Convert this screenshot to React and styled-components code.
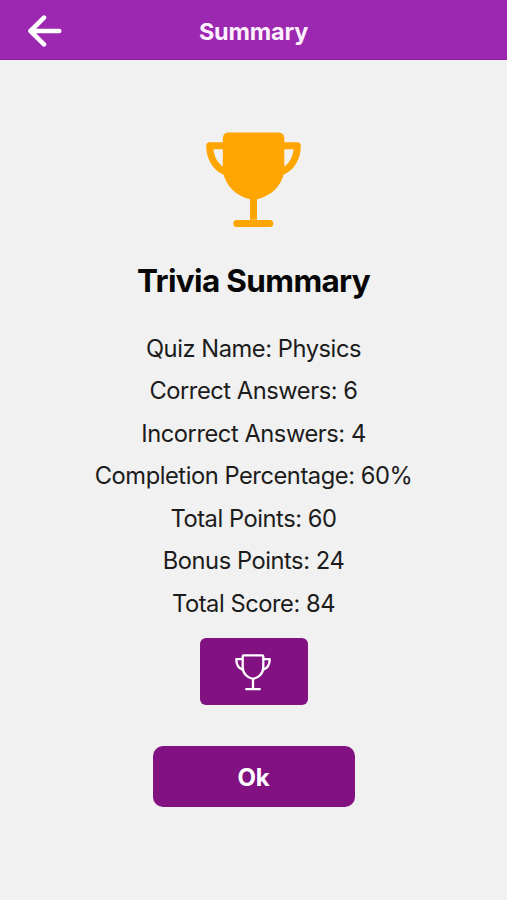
import React from 'react';
import styled, { createGlobalStyle } from 'styled-components';

const results = [
	{ label: 'Quiz Name', value: 'Physics' },
	{ label: 'Correct Answers', value: '6' },
	{ label: 'Incorrect Answers', value: '4' },
	{ label: 'Completion Percentage', value: '60%' },
	{ label: 'Total Points', value: '60' },
	{ label: 'Bonus Points', value: '24' },
	{ label: 'Total Score', value: '84' },
];

function BackArrow() {
	return (
		<svg
			width='34'
			height='32'
			viewBox='0 0 34 32'
			fill='none'
			stroke='#fff'
			strokeWidth='4.6'
			strokeLinecap='round'
			strokeLinejoin='round'
		>
			<path d='M16 2.6L2.5 16L16 29.4M3 16H31.2' />
		</svg>
	);
}

function TrophyFilled() {
	return (
		<svg width='95' height='95' viewBox='0 0 95 95'>
			<path
				fill='#ffa500'
				d='M22 0.5H73Q78.3 1 78.3 6.5V40C75.5 54 65 64 51 67.3V87.8H44V67.3C30 64 20 54 16.8 40V6.5Q17 1 22 0.5Z'
			/>
			<path
				fill='none'
				stroke='#ffa500'
				strokeWidth='7'
				strokeLinecap='round'
				strokeLinejoin='round'
				d='M19 13.7H3.7C3.7 25 9 35.5 19 39.6M76 13.7H91.3C91.3 25 86 35.5 76 39.6M30.8 91.4H63.8'
			/>
		</svg>
	);
}

function TrophyOutline() {
	return (
		<svg
			width='36'
			height='37'
			viewBox='0 0 36 37'
			fill='none'
			stroke='#fff'
			strokeWidth='2.3'
			strokeLinecap='round'
			strokeLinejoin='round'
		>
			<path d='M8.8 1.4H27.2Q28.3 1.4 28.3 2.5V13C28.3 19.5 23.7 23.9 18 24.8C12.3 23.9 7.7 19.5 7.7 13V2.5Q7.7 1.4 8.8 1.4Z' />
			<path d='M7.7 5.2H1.3C1.3 10 3.5 14.3 7.9 15.8M28.3 5.2H34.7C34.7 10 32.5 14.3 28.1 15.8' />
			<path d='M18 24.8V35.2M11.2 35.2H24.8' />
		</svg>
	);
}

function App() {
	return (
		<Screen>
			<GlobalStyles />
			<Header>
				<BackButton aria-label='Back'>
					<BackArrow />
				</BackButton>
				<HeaderTitle>Summary</HeaderTitle>
			</Header>
			<Content>
				<TrophyFilled />
				<Title>Trivia Summary</Title>
				<ResultList>
					{results.map(({ label, value }) => (
						<ResultRow key={label}>
							{label}: {value}
						</ResultRow>
					))}
				</ResultList>
				<TrophyButton aria-label='Leaderboard'>
					<TrophyOutline />
				</TrophyButton>
				<OkButton>Ok</OkButton>
			</Content>
		</Screen>
	);
}

const GlobalStyles = createGlobalStyle`
	* {
		box-sizing: border-box;
	}
	body {
		margin: 0;
		background: #f1f1f1;
		font-family: Inter, 'Liberation Sans', sans-serif;
	}
	button {
		border: 0;
		padding: 0;
		font-family: inherit;
		color: #fff;
		cursor: pointer;
	}
	svg {
		display: block;
		flex-shrink: 0;
	}
`;

const Screen = styled.div`
	min-height: 100vh;
	background: #f1f1f1;
`;

const Header = styled.header`
	display: grid;
	grid-template-columns: 90px 1fr 90px;
	align-items: center;
	height: 60px;
	padding-top: 2px;
	background: #9c27b0;
	border-bottom: 1px solid #8e24a3;
`;

const BackButton = styled.button`
	display: flex;
	padding-left: 28px;
	background: none;
`;

const HeaderTitle = styled.h1`
	margin: 0;
	padding-top: 2px;
	color: #fcf0fd;
	font-size: 23.5px;
	font-weight: 700;
	letter-spacing: -0.2px;
	line-height: 30px;
	text-align: center;
`;

const Content = styled.main`
	display: flex;
	flex-direction: column;
	align-items: center;
	padding-top: 72px;
`;

const Title = styled.h2`
	margin: 34px 0 26.7px;
	color: #070707;
	font-size: 31.5px;
	font-weight: 700;
	letter-spacing: -0.65px;
	line-height: 40px;
`;

const ResultList = styled.ul`
	margin: 0;
	padding: 0;
	list-style: none;
	text-align: center;
`;

const ResultRow = styled.li`
	color: #1c1c1c;
	font-size: 23.7px;
	letter-spacing: -0.45px;
	line-height: 42.55px;
`;

const TrophyButton = styled.button`
	display: flex;
	align-items: center;
	justify-content: center;
	width: 108px;
	height: 67px;
	margin-top: 12.5px;
	padding: 1px 2px 0 0;
	border-radius: 6px;
	background: #821282;
`;

const OkButton = styled.button`
	width: 202px;
	height: 61px;
	margin-top: 41px;
	padding-top: 1px;
	border-radius: 10px;
	background: #821282;
	font-size: 24px;
	font-weight: 700;
	letter-spacing: -0.3px;
`;

export default App;
